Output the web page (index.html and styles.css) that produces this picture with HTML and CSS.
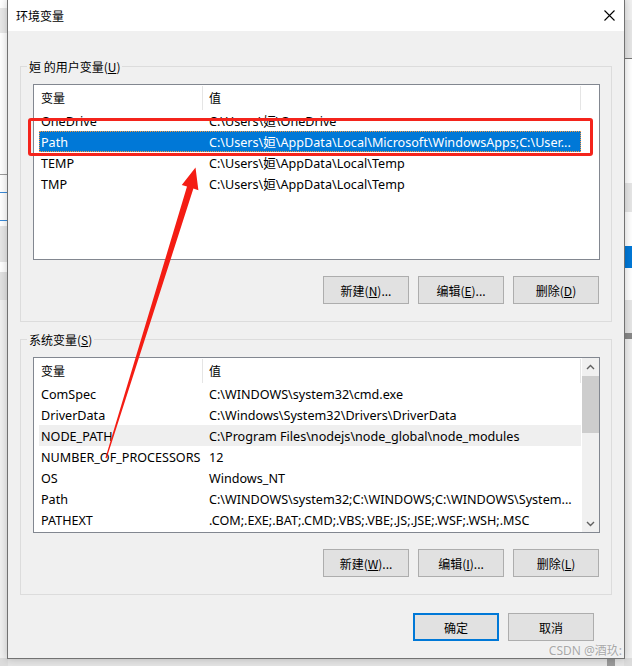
FILE: index.html
```html
<!DOCTYPE html>
<html lang="zh-CN">
<head>
    <meta charset="UTF-8">
    <title>环境变量</title>
    <link rel="stylesheet" href="styles.css">
</head>
<body>
<div class="desktop">
    <div class="behind behind-left"></div>
    <div class="behind behind-right"></div>
    <div class="behind-block"></div>

    <div class="dialog">
        <div class="titlebar">
            <span class="title">环境变量</span>
            <svg class="close" width="11" height="11" viewBox="0 0 11 11">
                <path d="M0.5 0.5 L10.5 10.5 M10.5 0.5 L0.5 10.5" stroke="#000" stroke-width="1.1" fill="none"/>
            </svg>
        </div>

        <div class="dialog-body">
            <fieldset class="group">
                <legend>姮 的用户变量(<u>U</u>)</legend>
                <div class="list">
                    <div class="list-main">
                        <div class="list-head">
                            <div class="hcell hcell-name">变量</div>
                            <div class="hcell hcell-value">值</div>
                        </div>
                        <div class="row"><span class="c-name">OneDrive</span><span class="c-value">C:\Users\姮\OneDrive</span></div>
                        <div class="row selected"><span class="c-name">Path</span><span class="c-value">C:\Users\姮\AppData\Local\Microsoft\WindowsApps;C:\User...</span></div>
                        <div class="row"><span class="c-name">TEMP</span><span class="c-value">C:\Users\姮\AppData\Local\Temp</span></div>
                        <div class="row"><span class="c-name">TMP</span><span class="c-value">C:\Users\姮\AppData\Local\Temp</span></div>
                    </div>
                </div>
                <div class="btn-row">
                    <button class="btn">新建(<u>N</u>)...</button>
                    <button class="btn">编辑(<u>E</u>)...</button>
                    <button class="btn">删除(<u>D</u>)</button>
                </div>
            </fieldset>

            <fieldset class="group">
                <legend>系统变量(<u>S</u>)</legend>
                <div class="list">
                    <div class="list-main">
                        <div class="list-head">
                            <div class="hcell hcell-name">变量</div>
                            <div class="hcell hcell-value">值</div>
                        </div>
                        <div class="row"><span class="c-name">ComSpec</span><span class="c-value">C:\WINDOWS\system32\cmd.exe</span></div>
                        <div class="row"><span class="c-name">DriverData</span><span class="c-value">C:\Windows\System32\Drivers\DriverData</span></div>
                        <div class="row hover"><span class="c-name">NODE_PATH</span><span class="c-value">C:\Program Files\nodejs\node_global\node_modules</span></div>
                        <div class="row"><span class="c-name">NUMBER_OF_PROCESSORS</span><span class="c-value">12</span></div>
                        <div class="row"><span class="c-name">OS</span><span class="c-value">Windows_NT</span></div>
                        <div class="row"><span class="c-name">Path</span><span class="c-value">C:\WINDOWS\system32;C:\WINDOWS;C:\WINDOWS\System...</span></div>
                        <div class="row"><span class="c-name">PATHEXT</span><span class="c-value">.COM;.EXE;.BAT;.CMD;.VBS;.VBE;.JS;.JSE;.WSF;.WSH;.MSC</span></div>
                    </div>
                    <div class="scrollbar">
                        <div class="sb-arrow">
                            <svg width="9" height="6" viewBox="0 0 9 6"><path d="M1 5 L4.5 1.5 L8 5" stroke="#606060" stroke-width="1.4" fill="none"/></svg>
                        </div>
                        <div class="sb-track"><div class="sb-thumb"></div></div>
                        <div class="sb-arrow">
                            <svg width="9" height="6" viewBox="0 0 9 6"><path d="M1 1 L4.5 4.5 L8 1" stroke="#606060" stroke-width="1.4" fill="none"/></svg>
                        </div>
                    </div>
                </div>
                <div class="btn-row">
                    <button class="btn">新建(<u>W</u>)...</button>
                    <button class="btn">编辑(<u>I</u>)...</button>
                    <button class="btn">删除(<u>L</u>)</button>
                </div>
            </fieldset>

            <div class="dialog-buttons">
                <button class="btn btn-default">确定</button>
                <button class="btn">取消</button>
            </div>
        </div>
    </div>

    <!-- annotations drawn on top of the screenshot -->
    <div class="callout"></div>
    <svg class="arrow" width="632" height="666" viewBox="0 0 632 666">
        <polygon points="105.4,458 187,186.6 181.8,185 195.5,167.5 198.4,190.3 193.4,188.6 106.6,458.3" fill="#f41d14"/>
    </svg>
    <div class="watermark">CSDN @酒玖:</div>
</div>
</body>
</html>
```

FILE: styles.css
```css
* {
    box-sizing: border-box;
}
body {
    margin: 0;
    font-family: "Noto Sans", "Noto Sans CJK SC", sans-serif;
    font-size: 12px;
    color: #000;
}
.desktop {
    position: relative;
    width: 632px;
    height: 666px;
    overflow: hidden;
    background: #e4e4e4;
}

/* the window behind the dialog */
.behind {
    position: absolute;
    top: 0;
    width: 8px;
    height: 666px;
}
.behind-left {
    left: 0;
    background: linear-gradient(to bottom,
        #fff 0, #fff 8px,
        #e8e8e8 8px, #e8e8e8 33px,
        #fff 33px, #fff 174px,
        #9c9c9c 174px, #9c9c9c 175px,
        #fff 175px, #fff 192px,
        #3a8ad8 192px, #3a8ad8 193px,
        #fff 193px, #fff 220px,
        #3a8ad8 220px, #3a8ad8 221px,
        #fff 221px, #fff 226px,
        #e6e6e6 226px, #e6e6e6 262px,
        #fff 262px, #fff 272px,
        #e2e2e2 272px, #e2e2e2 300px,
        #f0f0f0 300px, #f0f0f0 658px,
        #dcdcdc 658px);
}
.behind-right {
    left: 624px;
    background: linear-gradient(to bottom,
        #f0f0f0 0, #f0f0f0 20px,
        #e6e6e6 20px, #e6e6e6 58px,
        #777 58px, #777 59px,
        #fff 59px, #fff 183px,
        #e6e6e6 183px, #e6e6e6 212px,
        #fff 212px, #fff 246px,
        #0078d7 246px, #0078d7 268px,
        #fff 268px, #fff 300px,
        #e6e6e6 300px, #e6e6e6 333px,
        #888 333px, #888 339px,
        #f0f0f0 339px, #f0f0f0 658px,
        #dcdcdc 658px);
}
.behind-block {
    position: absolute;
    left: 607px;
    top: 658px;
    width: 8px;
    height: 8px;
    background: #9a9a9a;
}

/* dialog */
.dialog {
    position: absolute;
    left: 7px;
    top: -1px;
    width: 618px;
    height: 660px;
    border: 1px solid #727272;
    background: #f0f0f0;
    box-shadow: 0 0 8px rgba(0,0,0,0.22);
}
.titlebar {
    height: 31px;
    background: #fff;
    display: flex;
    align-items: center;
    justify-content: space-between;
    padding: 0 9px 1px 8px;
}
.title {
    font-family: "Noto Sans CJK SC", sans-serif;
    font-size: 12px;
}
.close {
    display: block;
}
.dialog-body {
    padding: 27px 12px 0 12px;
}

/* group boxes */
.group {
    margin: 0 0 9px 0;
    padding: 9px 11px 17px 12px;
    border: 1px solid #dcdcdc;
    min-width: 0;
}
.group legend {
    margin-left: -6px;
    padding: 0 2px;
    line-height: 17px;
    font-family: "Noto Sans CJK SC", sans-serif;
}
.list {
    height: 176px;
    border: 1px solid #828790;
    background: #fff;
    display: flex;
}
.list-main {
    flex: 1;
    min-width: 0;
}
.list-head {
    display: flex;
    height: 25px;
}
.hcell {
    height: 24px;
    margin-top: 1px;
    line-height: 24px;
    border-right: 1px solid #e5e5e5;
    font-family: "Noto Sans CJK SC", sans-serif;
}
.hcell-name {
    width: 169px;
    padding-left: 7px;
}
.hcell-value {
    width: 378px;
    padding-left: 6px;
}
.row {
    display: flex;
    width: 542px;
    height: 21px;
    margin-left: 5px;
    font-size: 12.6px;
    line-height: 23px;
    white-space: nowrap;
    overflow: hidden;
}
.c-name {
    width: 168px;
    padding-left: 2px;
    overflow: hidden;
}
.c-value {
    flex: 1;
    padding-left: 2px;
    overflow: hidden;
}
.row.selected {
    background: #0078d7;
    color: #fff;
    outline: 1px dotted #ff9a3c;
    outline-offset: -1px;
}
.row.hover {
    background: #efefef;
}

/* scrollbar */
.scrollbar {
    width: 17px;
    background: #f0f0f0;
    display: flex;
    flex-direction: column;
}
.sb-arrow {
    height: 17px;
    display: flex;
    align-items: center;
    justify-content: center;
}
.sb-arrow svg {
    display: block;
}
.sb-track {
    flex: 1;
    padding-top: 1px;
}
.sb-thumb {
    height: 57px;
    background: #cdcdcd;
}

/* buttons */
.btn-row {
    display: flex;
    justify-content: flex-end;
    gap: 9px;
    margin-top: 16px;
    padding-right: 1px;
}
.btn {
    width: 86px;
    height: 28px;
    padding: 0;
    margin: 0;
    background: #e1e1e1;
    border: 1px solid #adadad;
    font-family: "Noto Sans CJK SC", sans-serif;
    font-size: 12px;
    color: #000;
}
.btn-default {
    border: 2px solid #0078d7;
}
.dialog-buttons {
    display: flex;
    justify-content: flex-end;
    gap: 9px;
    margin-top: 18px;
    padding-right: 18px;
}

/* annotations */
.callout {
    position: absolute;
    left: 28px;
    top: 118px;
    width: 565px;
    height: 38px;
    border: 3px solid #f4241c;
    border-radius: 3px;
}
.arrow {
    position: absolute;
    left: 0;
    top: 0;
}
.watermark {
    position: absolute;
    right: 10px;
    top: 641px;
    font-family: "Noto Sans", "Noto Sans CJK SC", sans-serif;
    font-size: 12px;
    color: #a8a8a8;
    text-shadow: 0 0 2px #fff;
}
```
